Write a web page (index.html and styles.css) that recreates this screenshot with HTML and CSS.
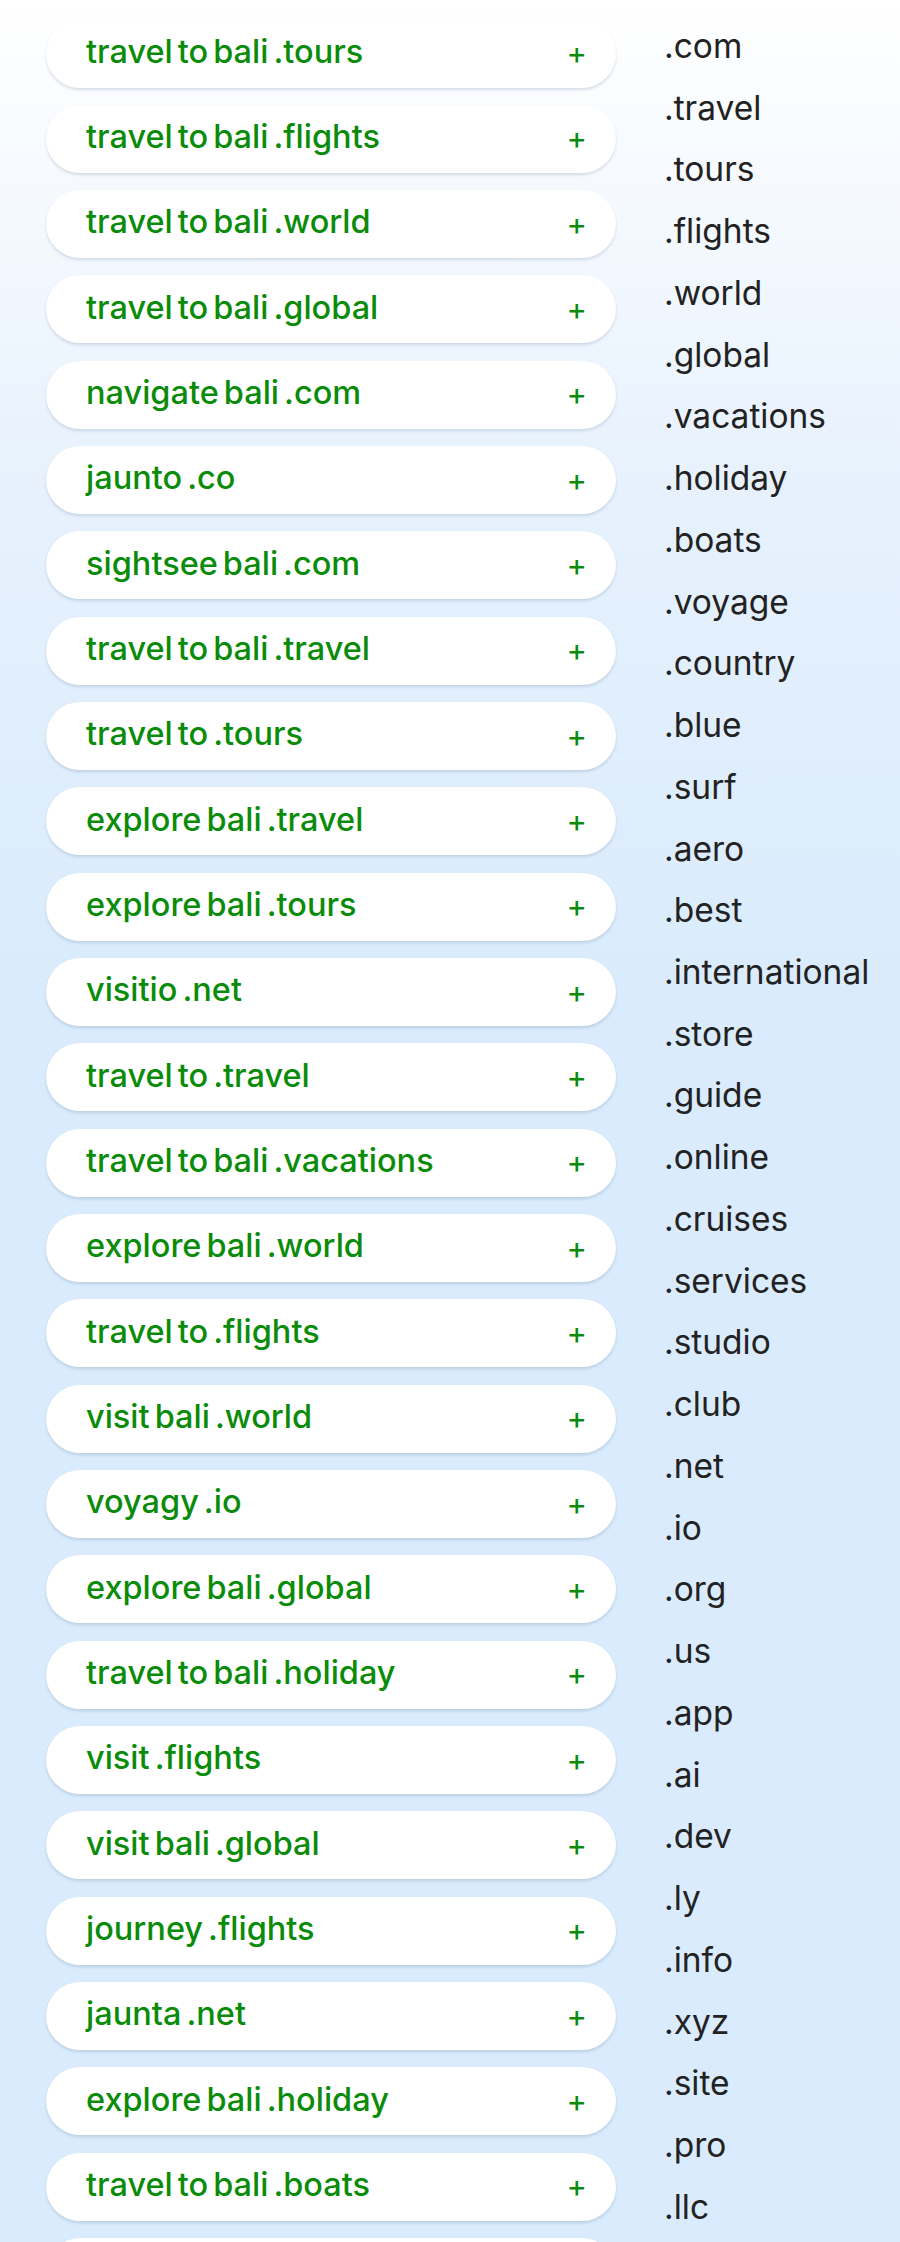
FILE: index.html
```html
<!DOCTYPE html>
<html>
<head>
<meta charset="utf-8">
<link rel="stylesheet" href="styles.css">
</head>
<body>
<div class="page">
  <div class="pills">
    <div class="pill"><span class="name"><span>travel</span><span>to</span><span>bali</span><span>.tours</span></span><span class="plus">+</span></div>
    <div class="pill"><span class="name"><span>travel</span><span>to</span><span>bali</span><span>.flights</span></span><span class="plus">+</span></div>
    <div class="pill"><span class="name"><span>travel</span><span>to</span><span>bali</span><span>.world</span></span><span class="plus">+</span></div>
    <div class="pill"><span class="name"><span>travel</span><span>to</span><span>bali</span><span>.global</span></span><span class="plus">+</span></div>
    <div class="pill"><span class="name"><span>navigate</span><span>bali</span><span>.com</span></span><span class="plus">+</span></div>
    <div class="pill"><span class="name"><span>jaunto</span><span>.co</span></span><span class="plus">+</span></div>
    <div class="pill"><span class="name"><span>sightsee</span><span>bali</span><span>.com</span></span><span class="plus">+</span></div>
    <div class="pill"><span class="name"><span>travel</span><span>to</span><span>bali</span><span>.travel</span></span><span class="plus">+</span></div>
    <div class="pill"><span class="name"><span>travel</span><span>to</span><span>.tours</span></span><span class="plus">+</span></div>
    <div class="pill"><span class="name"><span>explore</span><span>bali</span><span>.travel</span></span><span class="plus">+</span></div>
    <div class="pill"><span class="name"><span>explore</span><span>bali</span><span>.tours</span></span><span class="plus">+</span></div>
    <div class="pill"><span class="name"><span>visitio</span><span>.net</span></span><span class="plus">+</span></div>
    <div class="pill"><span class="name"><span>travel</span><span>to</span><span>.travel</span></span><span class="plus">+</span></div>
    <div class="pill"><span class="name"><span>travel</span><span>to</span><span>bali</span><span>.vacations</span></span><span class="plus">+</span></div>
    <div class="pill"><span class="name"><span>explore</span><span>bali</span><span>.world</span></span><span class="plus">+</span></div>
    <div class="pill"><span class="name"><span>travel</span><span>to</span><span>.flights</span></span><span class="plus">+</span></div>
    <div class="pill"><span class="name"><span>visit</span><span>bali</span><span>.world</span></span><span class="plus">+</span></div>
    <div class="pill"><span class="name"><span>voyagy</span><span>.io</span></span><span class="plus">+</span></div>
    <div class="pill"><span class="name"><span>explore</span><span>bali</span><span>.global</span></span><span class="plus">+</span></div>
    <div class="pill"><span class="name"><span>travel</span><span>to</span><span>bali</span><span>.holiday</span></span><span class="plus">+</span></div>
    <div class="pill"><span class="name"><span>visit</span><span>.flights</span></span><span class="plus">+</span></div>
    <div class="pill"><span class="name"><span>visit</span><span>bali</span><span>.global</span></span><span class="plus">+</span></div>
    <div class="pill"><span class="name"><span>journey</span><span>.flights</span></span><span class="plus">+</span></div>
    <div class="pill"><span class="name"><span>jaunta</span><span>.net</span></span><span class="plus">+</span></div>
    <div class="pill"><span class="name"><span>explore</span><span>bali</span><span>.holiday</span></span><span class="plus">+</span></div>
    <div class="pill"><span class="name"><span>travel</span><span>to</span><span>bali</span><span>.boats</span></span><span class="plus">+</span></div>
    <div class="pill"></div>
  </div>
  <ul class="tlds">
    <li>.com</li><li>.travel</li><li>.tours</li><li>.flights</li><li>.world</li><li>.global</li>
    <li>.vacations</li><li>.holiday</li><li>.boats</li><li>.voyage</li><li>.country</li><li>.blue</li>
    <li>.surf</li><li>.aero</li><li>.best</li><li>.international</li><li>.store</li><li>.guide</li>
    <li>.online</li><li>.cruises</li><li>.services</li><li>.studio</li><li>.club</li><li>.net</li>
    <li>.io</li><li>.org</li><li>.us</li><li>.app</li><li>.ai</li><li>.dev</li>
    <li>.ly</li><li>.info</li><li>.xyz</li><li>.site</li><li>.pro</li><li>.llc</li>
  </ul>
</div>
</body>
</html>
```
FILE: styles.css
```css
html, body {
  margin: 0;
  padding: 0;
}
body {
  font-family: Inter, "Noto Sans", sans-serif;
  background: linear-gradient(to bottom, #ffffff 0px, #e6f1fd 500px, #d9ebfc 1000px, #d9ebfc 100%);
  min-height: 2242px;
  overflow: hidden;
}
.page {
  display: flex;
  align-items: flex-start;
  gap: 48px;
  padding-left: 46px;
  height: 2242px;
  overflow: hidden;
}
.pills {
  width: 570px;
  display: flex;
  flex-direction: column;
  gap: 17.34px;
  padding-top: 19.5px;
  flex-shrink: 0;
}
.pill {
  height: 68px;
  background: #ffffff;
  border-radius: 34px;
  box-shadow: 0 2px 3px rgba(60, 90, 120, 0.18);
  display: flex;
  align-items: center;
  justify-content: space-between;
  padding: 0 29px 0 40px;
  box-sizing: border-box;
  color: #0a8c0a;
  flex-shrink: 0;
}
.name {
  display: flex;
  gap: 5px;
  font-size: 32.5px;
  font-weight: 500;
  line-height: 1;
  margin-top: -3px;
}
.plus {
  font-size: 31px;
  font-weight: 400;
  line-height: 1;
  margin-top: -2px;
}
.tlds {
  list-style: none;
  margin: 0;
  padding: 16px 0 0 0;
  font-size: 33.5px;
  color: #222222;
  line-height: 61.74px;
}
.tlds li {
  white-space: nowrap;
}
```
